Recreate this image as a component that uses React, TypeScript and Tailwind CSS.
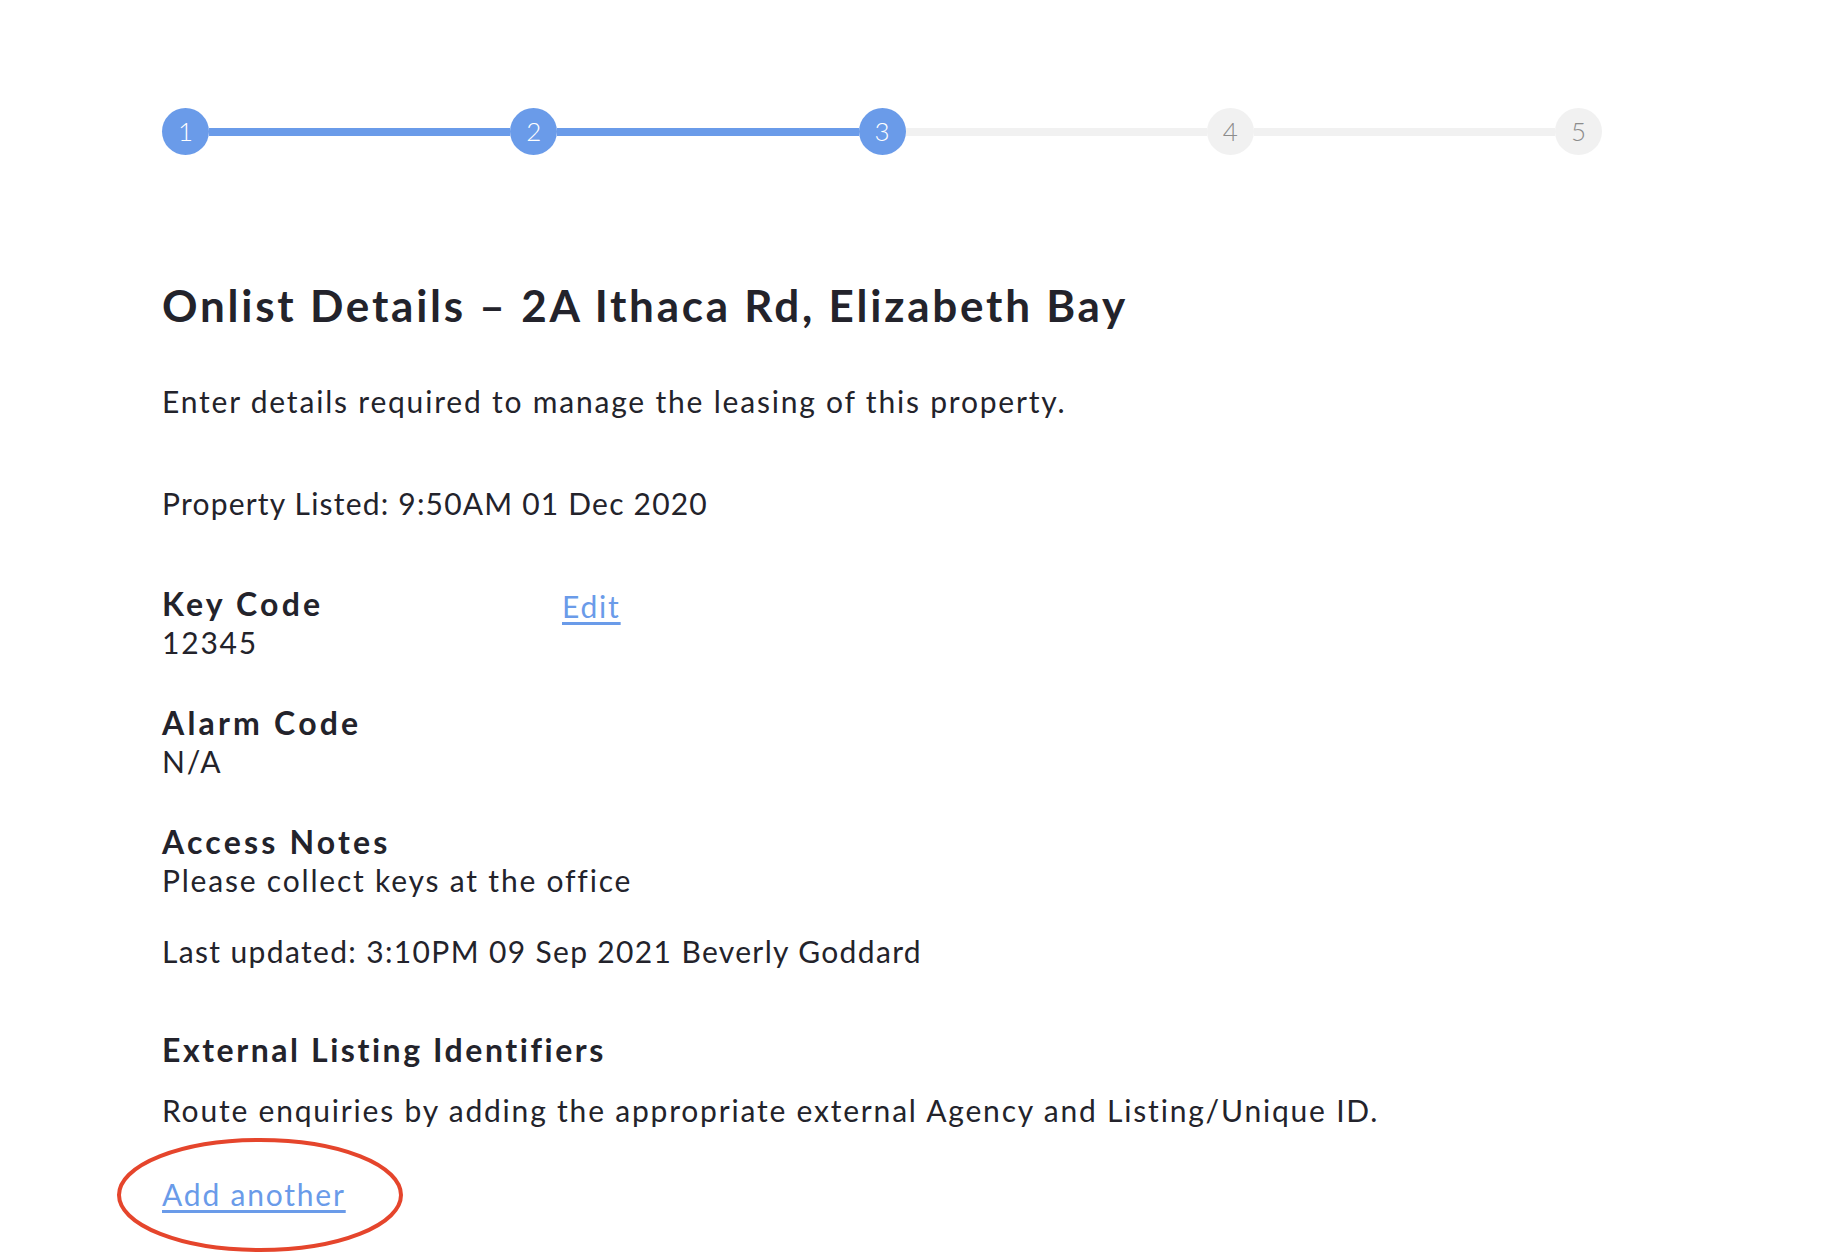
import React from "react";

const steps = [1, 2, 3, 4, 5];
const current = 3;

function Stepper() {
  return (
    <div className="flex w-[1440px] items-center tracking-normal">
      {steps.map((n, i) => {
        const done = n <= current;
        return (
          <React.Fragment key={n}>
            {i > 0 && (
              <div className={`h-[8px] flex-1 ${done ? "bg-[#6a9be9]" : "bg-[#f1f1f1]"}`} />
            )}
            <div
              className={`flex h-[47px] w-[47px] shrink-0 items-center justify-center rounded-full text-[26px] font-light ${
                done ? "bg-[#6a9be9] text-white" : "bg-[#f1f1f1] text-[#8c8c8c]"
              }`}
            >
              {n}
            </div>
          </React.Fragment>
        );
      })}
    </div>
  );
}

function Field({ label, value }: { label: string; value: string }) {
  return (
    <div>
      <div className="text-[32px] font-bold leading-[38px] tracking-[0.1em]">{label}</div>
      <div className="leading-[38px]">{value}</div>
    </div>
  );
}

export default function App() {
  return (
    <div
      className="min-h-[1260px] bg-white pl-[162px] pt-[108px] text-[30px] tracking-[0.06em] text-[#23232b]"
      style={{ fontFamily: "Lato, 'Open Sans', sans-serif" }}
    >
      <Stepper />

      <h1 className="mt-[124px] text-[44px] font-bold leading-[52px] tracking-[0.063em]">
        Onlist Details – 2A Ithaca Rd, Elizabeth Bay
      </h1>
      <p className="mt-[51px] leading-[38px]">
        Enter details required to manage the leasing of this property.
      </p>
      <p className="mt-[64px] leading-[38px] tracking-[0.04em]">Property Listed: 9:50AM 01 Dec 2020</p>

      <div className="mt-[63px] flex items-start">
        <div className="w-[400px]">
          <Field label="Key Code" value="12345" />
        </div>
        <a href="#" className="mt-[2px] leading-[38px] text-[#6a9be9] underline underline-offset-4">
          Edit
        </a>
      </div>

      <div className="mt-[43px]">
        <Field label="Alarm Code" value="N/A" />
      </div>

      <div className="mt-[43px]">
        <Field label="Access Notes" value="Please collect keys at the office" />
      </div>

      <p className="mt-[33px] leading-[38px] tracking-[0.045em]">
        Last updated: 3:10PM 09 Sep 2021 Beverly Goddard
      </p>

      <h2 className="mt-[61px] text-[32px] font-bold leading-[38px] tracking-[0.08em]">
        External Listing Identifiers
      </h2>
      <p className="mt-[22px] leading-[38px]">
        Route enquiries by adding the appropriate external Agency and Listing/Unique ID.
      </p>

      <div className="relative mt-[43px] inline-block">
        <a href="#" className="leading-[38px] text-[#6a9be9] underline underline-offset-4">
          Add another
        </a>
        <svg
          className="pointer-events-none absolute left-[-46px] top-[-35px]"
          width="288"
          height="116"
          viewBox="0 0 288 116"
        >
          <ellipse cx="144" cy="58" rx="141" ry="55" fill="none" stroke="#e5452c" strokeWidth="4" />
        </svg>
      </div>
    </div>
  );
}
